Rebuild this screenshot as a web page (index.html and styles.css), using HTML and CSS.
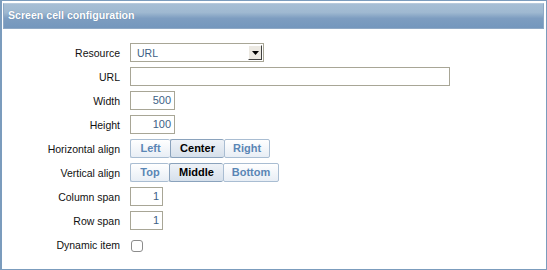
FILE: index.html
```html
<!DOCTYPE html>
<html>
<head>
<meta charset="utf-8">
<link rel="stylesheet" href="styles.css">
</head>
<body>
<div class="frame">
  <div class="header">Screen cell configuration</div>
  <div class="form">
    <div class="row">
      <div class="label">Resource</div>
      <div class="field">
        <div class="select"><span class="sel-text">URL</span><span class="sel-btn"><svg width="7" height="4" viewBox="0 0 7 4"><path d="M0 0H7L3.5 4Z" fill="#000"/></svg></span></div>
      </div>
    </div>
    <div class="row">
      <div class="label">URL</div>
      <div class="field"><div class="input url"></div></div>
    </div>
    <div class="row">
      <div class="label">Width</div>
      <div class="field"><div class="input num">500</div></div>
    </div>
    <div class="row">
      <div class="label">Height</div>
      <div class="field"><div class="input num">100</div></div>
    </div>
    <div class="row">
      <div class="label">Horizontal align</div>
      <div class="field">
        <div class="seg">
          <span class="btn w-left">Left</span><span class="btn on w-center">Center</span><span class="btn w-right">Right</span>
        </div>
      </div>
    </div>
    <div class="row">
      <div class="label">Vertical align</div>
      <div class="field">
        <div class="seg">
          <span class="btn w-top">Top</span><span class="btn on w-middle">Middle</span><span class="btn w-bottom">Bottom</span>
        </div>
      </div>
    </div>
    <div class="row">
      <div class="label">Column span</div>
      <div class="field"><div class="input span">1</div></div>
    </div>
    <div class="row">
      <div class="label">Row span</div>
      <div class="field"><div class="input span">1</div></div>
    </div>
    <div class="row">
      <div class="label">Dynamic item</div>
      <div class="field"><span class="check"></span></div>
    </div>
  </div>
</div>
</body>
</html>
```

FILE: styles.css
```css
html, body {
  margin: 0;
  padding: 0;
  background: #ffffff;
}
body {
  font-family: "Liberation Sans", Arial, sans-serif;
  font-size: 11px;
  color: #000;
}
.frame {
  width: 547px;
  height: 270px;
  box-sizing: border-box;
  border: 1px solid #7b9cbd;
  border-left-width: 2px;
  padding: 2px 2px 0 1px;
  background: #fff;
}
.header {
  height: 26px;
  box-sizing: border-box;
  border: 1px solid #8fa9c5;
  border-top-color: #b7cadc;
  background: linear-gradient(#a6bed5 0%, #9fb9d1 35%, #7d9dc0 60%, #7497bd 100%);
  color: #fff;
  font-weight: bold;
  font-size: 10.6px;
  line-height: 23px;
  padding-left: 4px;
  text-shadow: 0 0 1px #5c7c9f;
}
.form {
  padding-top: 14px;
  display: flex;
  flex-direction: column;
  gap: 5px;
}
.row {
  display: flex;
  align-items: center;
  height: 19px;
}
.label {
  width: 117px;
  text-align: right;
  padding-right: 10px;
  font-size: 10.5px;
  color: #111;
}
.field {
  display: flex;
  align-items: center;
}
.select {
  width: 134px;
  height: 19px;
  box-sizing: border-box;
  border: 1px solid #a8a696;
  display: flex;
  align-items: center;
  background: #fff;
}
.sel-text {
  flex: 1;
  padding-left: 6px;
  color: #3d5f86;
  font-size: 10.5px;
}
.sel-btn {
  width: 14px;
  height: 15px;
  margin-right: 1px;
  box-sizing: border-box;
  background: #ece9e2;
  border-top: 1px solid #fff;
  border-left: 1px solid #fff;
  border-right: 1px solid #404040;
  border-bottom: 1px solid #404040;
  display: flex;
  align-items: center;
  justify-content: center;
}
.input {
  height: 19px;
  box-sizing: border-box;
  border: 1px solid #a8a696;
  background: #fff;
  line-height: 17px;
  color: #3d5f86;
  text-align: right;
  padding-right: 3px;
}
.input.url { width: 320px; }
.input.num { width: 45px; }
.input.span { width: 33px; }
.seg {
  display: flex;
}
.btn {
  height: 19px;
  box-sizing: border-box;
  border: 1px solid #a9bdd2;
  border-right: none;
  border-radius: 2px;
  background: linear-gradient(#ffffff, #e8eef5);
  color: #5a86b5;
  font-weight: bold;
  text-align: center;
  line-height: 17px;
}
.btn:last-child { border-right: 1px solid #a9bdd2; }
.btn.on {
  background: linear-gradient(#eef2f7, #d6e0eb);
  border-color: #8aa2bc;
  color: #000;
}
.w-left { width: 40px; }
.w-center { width: 54px; }
.w-right { width: 46px; }
.w-top { width: 39px; }
.w-middle { width: 54px; }
.w-bottom { width: 56px; }
.check {
  display: block;
  width: 12px;
  height: 12px;
  margin-left: 1px;
  margin-top: 2px;
  box-sizing: border-box;
  border: 1px solid #8c8c8c;
  border-radius: 3px;
  background: #fff;
}
```
